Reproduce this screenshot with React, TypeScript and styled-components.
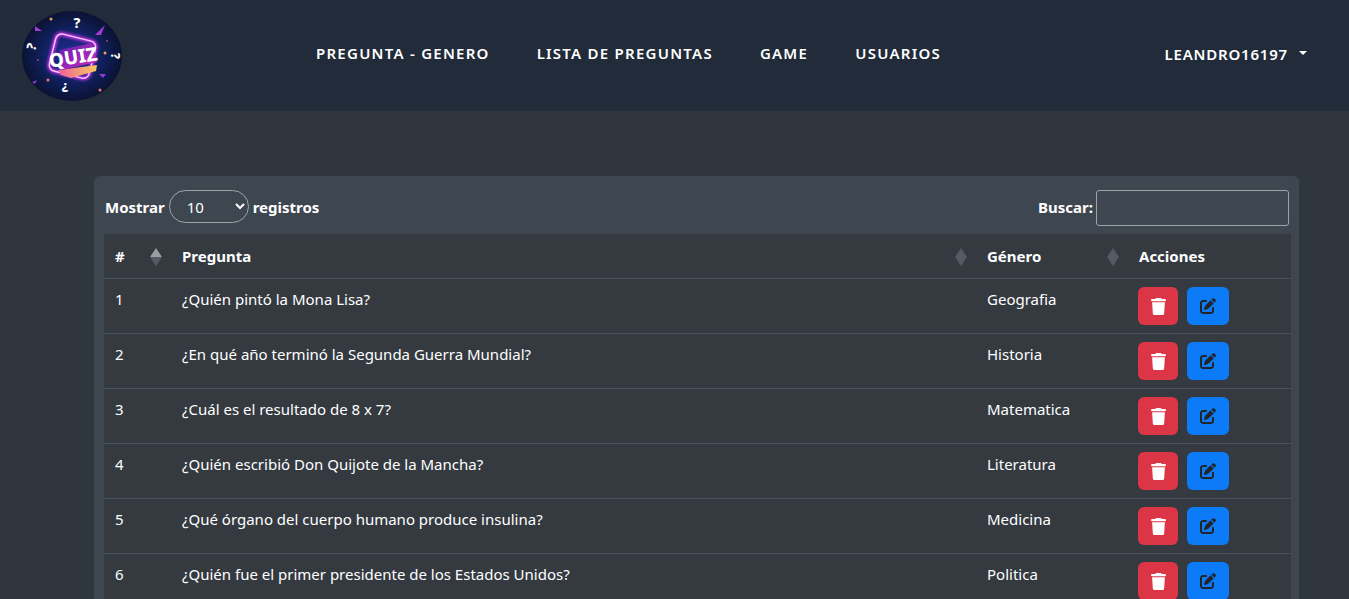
import styled, { createGlobalStyle } from "styled-components";
import { FaTrash, FaPenToSquare } from "react-icons/fa6";

const GlobalStyle = createGlobalStyle`
  html, body {
    margin: 0;
    height: 599px;
    overflow: hidden;
    background: #30363d;
    color: #fff;
    font-family: "Noto Sans", "Open Sans", sans-serif;
    font-size: 15px;
  }
`;

const Navbar = styled.nav`
  height: 111px;
  background: #212b3a;
  display: grid;
  grid-template-columns: 295px 1fr auto;
  align-items: center;
  padding: 0 41px 0 21px;
  box-sizing: border-box;
`;

const LogoWrap = styled.div`
  display: flex;
  align-items: center;
`;

const NavLinks = styled.div`
  display: flex;
  gap: 47px;
  margin-top: -5px;
`;

const NavLink = styled.a`
  font-size: 15px;
  font-weight: 600;
  letter-spacing: 1.25px;
  color: #fff;
  white-space: nowrap;
`;

const UserMenu = styled.div`
  display: flex;
  justify-content: flex-end;
  align-items: center;
  gap: 11px;
  font-size: 15px;
  font-weight: 600;
  letter-spacing: 0.8px;
  margin-top: -4px;
`;

const Caret = styled.span`
  width: 0;
  height: 0;
  border-left: 4px solid transparent;
  border-right: 4px solid transparent;
  border-top: 4px solid #fff;
  margin: 0 1px 2px 0;
`;

const Main = styled.main`
  padding: 65px 50px 0 94px;
`;

const Card = styled.section`
  background: #3e4650;
  border-radius: 6px;
  padding: 14px 8px 0 10px;
`;

const Controls = styled.div`
  display: flex;
  justify-content: space-between;
  align-items: center;
  height: 36px;
  margin-bottom: 8px;
  padding: 0 2px 0 1px;
`;

const ControlGroup = styled.label`
  display: flex;
  align-items: center;
  gap: 4px;
  font-weight: 700;
  font-size: 15px;
  line-height: 20px;
  margin-top: -2px;
`;

const LengthSelect = styled.select`
  width: 80px;
  height: 33px;
  margin-top: -1px;
  border: 1px solid #a0a4a8;
  border-radius: 17px;
  background: transparent;
  color: #fff;
  font: inherit;
  font-weight: 400;
  padding: 0 0 0 13px;
  box-sizing: border-box;
  outline: none;
`;

const SearchInput = styled.input`
  width: 193px;
  height: 36px;
  border: 1px solid #a0a4a8;
  border-radius: 3px;
  background: transparent;
  box-sizing: border-box;
  margin: 2px 0 0 -1px;
`;

const Table = styled.div`
  background: #343a40;
`;

const Row = styled.div<{ $head?: boolean }>`
  display: grid;
  grid-template-columns: 67px 1fr 152px 163px;
  height: ${(p) => (p.$head ? "45px" : "55px")};
  border-bottom: 1px solid #4a5057;
  box-sizing: border-box;
  align-items: ${(p) => (p.$head ? "center" : "start")};
  font-weight: ${(p) => (p.$head ? 700 : 400)};
  font-size: 15px;
`;

const Cell = styled.div<{ $head?: boolean }>`
  position: relative;
  padding: ${(p) => (p.$head ? "0" : "9px")} 11px 0;
  line-height: 22px;
  white-space: nowrap;
`;

const SortIcon = styled.svg`
  position: absolute;
  right: 9px;
  top: 3px;
`;

const Actions = styled.div`
  display: flex;
  gap: 9px;
  padding: 8px 0 0 10px;
`;

const ActionButton = styled.button<{ $color: string; $wide?: boolean }>`
  width: ${(p) => (p.$wide ? "42px" : "40px")};
  height: 38px;
  border: 0;
  border-radius: 6px;
  background: ${(p) => p.$color};
  display: flex;
  align-items: center;
  justify-content: center;
  padding: 0;
`;

const rows = [
  ["1", "¿Quién pintó la Mona Lisa?", "Geografia"],
  ["2", "¿En qué año terminó la Segunda Guerra Mundial?", "Historia"],
  ["3", "¿Cuál es el resultado de 8 x 7?", "Matematica"],
  ["4", "¿Quién escribió Don Quijote de la Mancha?", "Literatura"],
  ["5", "¿Qué órgano del cuerpo humano produce insulina?", "Medicina"],
  ["6", "¿Quién fue el primer presidente de los Estados Unidos?", "Politica"],
];

function Logo() {
  return (
    <svg width="102" height="92" viewBox="0 0 102 92">
      <defs>
        <radialGradient id="bg" cx="50%" cy="50%" r="50%">
          <stop offset="0%" stopColor="#20309a" />
          <stop offset="60%" stopColor="#10205e" />
          <stop offset="100%" stopColor="#0a1233" />
        </radialGradient>
        <linearGradient id="tag" x1="0" y1="0" x2="1" y2="1">
          <stop offset="0%" stopColor="#5a20b0" />
          <stop offset="100%" stopColor="#d42cc0" />
        </linearGradient>
        <linearGradient id="under" x1="0" y1="0" x2="1" y2="0">
          <stop offset="0%" stopColor="#f0609a" />
          <stop offset="100%" stopColor="#f8c860" />
        </linearGradient>
        <filter id="glow" x="-30%" y="-30%" width="160%" height="160%">
          <feGaussianBlur stdDeviation="1.6" />
        </filter>
      </defs>
      <ellipse cx="51" cy="46" rx="50" ry="45" fill="url(#bg)" />
      <rect x="31" y="27" width="41" height="38" rx="6" fill="none" stroke="#d030f0" strokeWidth="4" filter="url(#glow)" transform="rotate(14 51 46)" />
      <rect x="31" y="27" width="41" height="38" rx="6" fill="none" stroke="#f6c8ff" strokeWidth="1.4" transform="rotate(14 51 46)" />
      <polygon points="37,60 76,55 75,61 50,68 40,65" fill="url(#under)" />
      <polygon points="38,40 71,33 76,52 41,60" fill="url(#tag)" />
      <text x="52" y="54" textAnchor="middle" fontFamily="Noto Sans" fontWeight="800" fontSize="19" fill="#fff" transform="rotate(-9 52 47)">QUIZ</text>
      <text x="56" y="18" textAnchor="middle" fontFamily="Noto Sans" fontWeight="800" fontSize="14" fill="#fff">?</text>
      <text x="11" y="41" textAnchor="middle" fontFamily="Noto Sans" fontWeight="800" fontSize="13" fill="#fff" transform="rotate(-70 11 37)">?</text>
      <text x="94" y="50" textAnchor="middle" fontFamily="Noto Sans" fontWeight="800" fontSize="12" fill="#fff" transform="rotate(90 94 46)">?</text>
      <text x="44" y="80" textAnchor="middle" fontFamily="Noto Sans" fontWeight="800" fontSize="13" fill="#fff">¿</text>
      <polygon points="14,16 21,21 14,21" fill="#a43ad0" />
      <polygon points="84,15 74,25 80,25" fill="#a43ad0" />
      <polygon points="78,64 85,64 82,68" fill="#8a3ad0" />
      <polygon points="11,72 16,70 14,74" fill="#8a3ad0" />
      <circle cx="30" cy="9" r="1.5" fill="#f0a050" />
      <circle cx="84" cy="43" r="1.5" fill="#f0a050" />
      <circle cx="27" cy="70" r="1.5" fill="#f07a70" />
      <circle cx="79" cy="80" r="1.5" fill="#f07a70" />
      <circle cx="17" cy="50" r="0.8" fill="#f07a70" />
      <circle cx="86" cy="31" r="0.8" fill="#f07a70" />
    </svg>
  );
}

function SortArrows({ active }: { active?: boolean }) {
  return (
    <SortIcon width="12" height="18" viewBox="0 0 12 18">
      <polygon points="6,0 12,9 0,9" fill={active ? "#9a9da1" : "#555b62"} />
      <polygon points="0,9 12,9 6,18" fill="#555b62" />
    </SortIcon>
  );
}

export default function App() {
  return (
    <>
      <GlobalStyle />
      <Navbar>
        <LogoWrap>
          <Logo />
        </LogoWrap>
        <NavLinks>
          <NavLink>PREGUNTA - GENERO</NavLink>
          <NavLink>LISTA DE PREGUNTAS</NavLink>
          <NavLink>GAME</NavLink>
          <NavLink>USUARIOS</NavLink>
        </NavLinks>
        <UserMenu>
          LEANDRO16197
          <Caret />
        </UserMenu>
      </Navbar>
      <Main>
        <Card>
          <Controls>
            <ControlGroup>
              Mostrar
              <LengthSelect defaultValue="10">
                <option value="10">10</option>
              </LengthSelect>
              registros
            </ControlGroup>
            <ControlGroup>
              Buscar:
              <SearchInput />
            </ControlGroup>
          </Controls>
          <Table>
            <Row $head>
              <Cell $head>
                #
                <SortArrows active />
              </Cell>
              <Cell $head>
                Pregunta
                <SortArrows />
              </Cell>
              <Cell $head>
                Género
                <SortArrows />
              </Cell>
              <Cell $head>Acciones</Cell>
            </Row>
            {rows.map(([id, question, genre]) => (
              <Row key={id}>
                <Cell>{id}</Cell>
                <Cell>{question}</Cell>
                <Cell>{genre}</Cell>
                <Actions>
                  <ActionButton $color="#dc3545">
                    <FaTrash size={17} color="#fff" />
                  </ActionButton>
                  <ActionButton $color="#0d7bf7" $wide>
                    <FaPenToSquare size={16} color="#212529" />
                  </ActionButton>
                </Actions>
              </Row>
            ))}
          </Table>
        </Card>
      </Main>
    </>
  );
}
